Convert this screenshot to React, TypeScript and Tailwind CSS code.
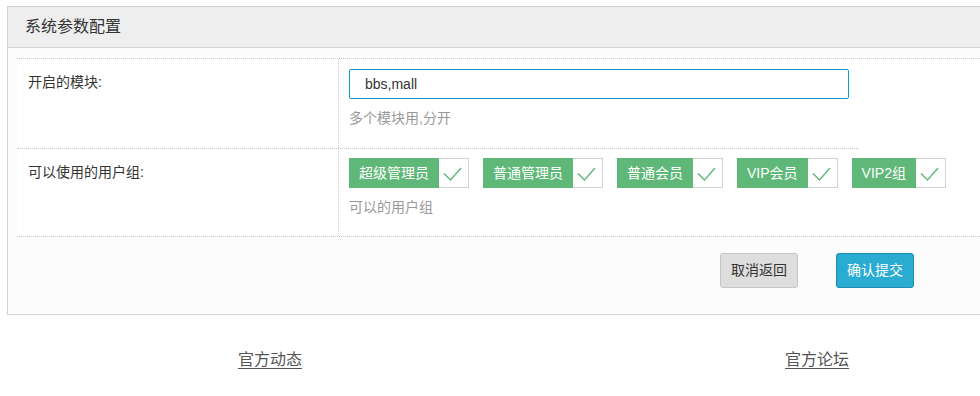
import React from "react";

const groups = [
  { name: "超级管理员" },
  { name: "普通管理员" },
  { name: "普通会员" },
  { name: "VIP会员" },
  { name: "VIP2组" },
];

function Check() {
  return (
    <div className="w-[30px] h-[30px] border border-l-0 border-[#d2d2d2] bg-white box-border">
      <svg width="29" height="28" viewBox="0 0 29 28" className="block">
        <polyline
          points="5,14.5 11.5,21 22,9"
          fill="none"
          stroke="#5fb878"
          strokeWidth="1.4"
        />
      </svg>
    </div>
  );
}

export default function App() {
  return (
    <div className="w-[980px] h-[396px] overflow-hidden bg-white font-['Liberation_Sans','Noto_Sans_CJK_SC',sans-serif]">
      <div className="w-[1090px] pt-[6px] pl-[7px]">
        <div className="w-[1076px] border border-[#d2d2d2] bg-[#fcfcfc]">
          <div className="h-[41px] bg-[#eeeeee] border-b border-[#d2d2d2] pl-[17px] flex items-center text-[16px] text-[#333]">
            系统参数配置
          </div>
          <div className="pt-[10px] pl-[9px] pb-[26px]">
            <div className="border-t border-dotted border-[#c8c8c8] bg-white">
              <div className="w-[842px] h-[90px] flex border-b border-dotted border-[#c8c8c8]">
                <div className="w-[322px] border-r border-dotted border-[#c8c8c8] pl-[11px] pt-[13px] text-[14px] leading-[20px] text-[#333]">
                  开启的模块:
                </div>
                <div className="pl-[10px] pt-[10px]">
                  <div className="w-[500px] h-[30px] border border-[#0b9bc6] rounded-[2px] pl-[15px] flex items-center text-[14px] text-[#333] bg-white">
                    bbs,mall
                  </div>
                  <div className="mt-[9px] text-[14px] leading-[20px] text-[#999]">
                    多个模块用,分开
                  </div>
                </div>
              </div>
              <div className="h-[88px] flex border-b border-dotted border-[#c8c8c8]">
                <div className="w-[322px] border-r border-dotted border-[#c8c8c8] pl-[11px] pt-[13px] text-[14px] leading-[20px] text-[#333]">
                  可以使用的用户组:
                </div>
                <div className="pl-[10px] pt-[9px]">
                  <div className="flex gap-[14px]">
                    {groups.map((g) => (
                      <div key={g.name} className="flex h-[30px]">
                        <span className="h-[30px] px-[10px] bg-[#5fb878] text-white text-[14px] leading-[30px]">
                          {g.name}
                        </span>
                        <Check />
                      </div>
                    ))}
                  </div>
                  <div className="mt-[9px] text-[14px] leading-[20px] text-[#999]">
                    可以的用户组
                  </div>
                </div>
              </div>
            </div>
            <div className="flex pt-[16px] pl-[703px] gap-[38px]">
              <button className="w-[78px] h-[35px] rounded-[3px] border border-[#c6c6c6] bg-[#dedede] text-[14px] text-[#333]">
                取消返回
              </button>
              <button className="w-[78px] h-[35px] rounded-[3px] border border-[#1b8db3] bg-[#2aabd2] text-[14px] text-white">
                确认提交
              </button>
            </div>
          </div>
        </div>
        <div className="flex pt-[34px] pl-[231px] text-[16px] leading-[22px] text-[#555]">
          <a className="underline underline-offset-[3px]">官方动态</a>
          <a className="underline underline-offset-[3px] ml-[483px]">官方论坛</a>
        </div>
      </div>
    </div>
  );
}
